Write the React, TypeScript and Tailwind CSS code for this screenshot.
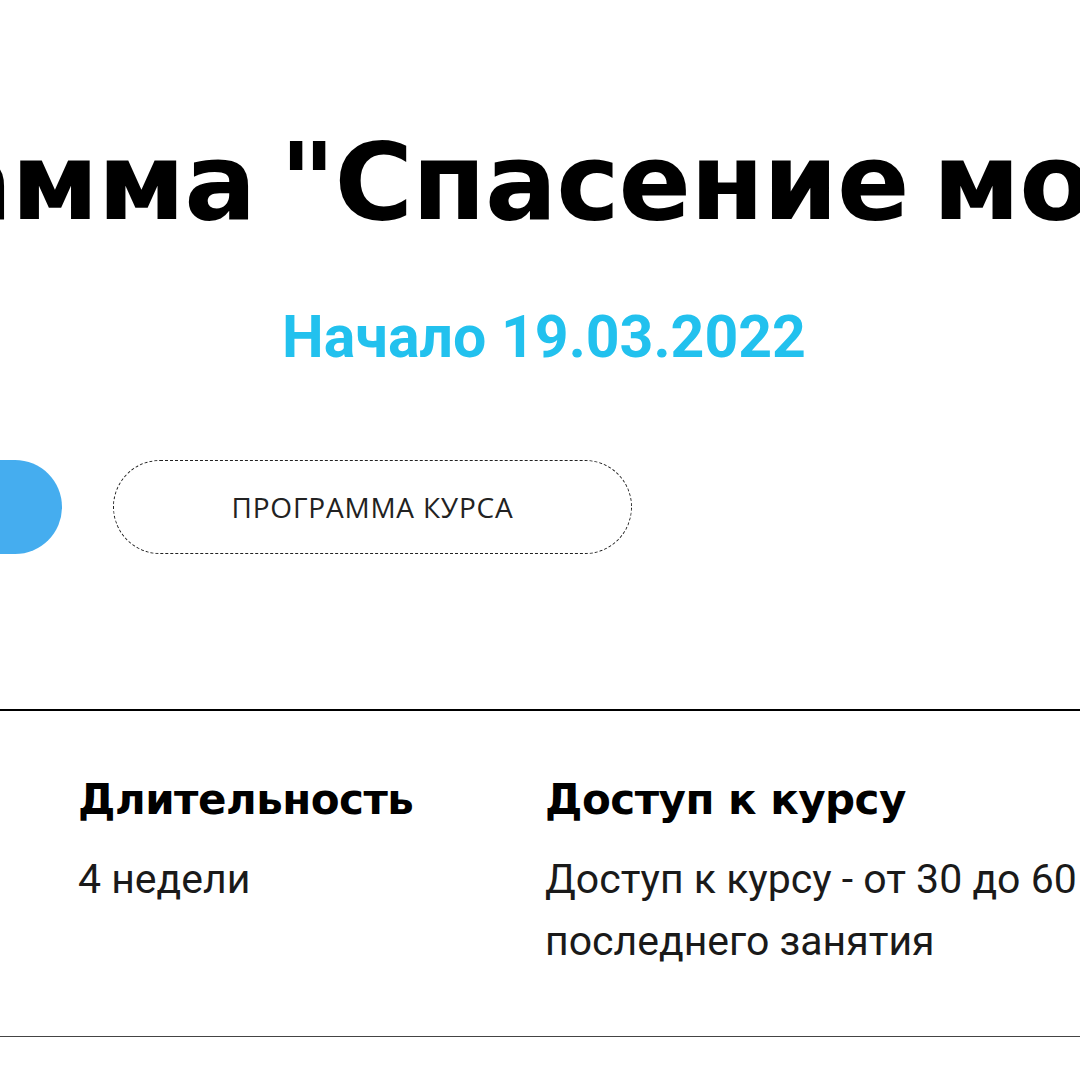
export default function App() {
  return (
    <div className="w-[1080px] h-[1080px] overflow-hidden bg-white">
      {/* заголовок курса, обрезан по краям */}
      <div className="pt-[119px] -ml-[427px] whitespace-nowrap">
        <h1 className="text-[107px] leading-[126px] font-bold text-black font-['DejaVu_Sans',sans-serif] tracking-[-1px] [word-spacing:-12px]">
          Программа "Спасение мозга"
        </h1>
      </div>

      <div className="mt-[57px] flex justify-center pl-[8px]">
        <p className="text-[59px] leading-[70px] font-bold text-[#22c1ee] font-['Roboto',sans-serif]">
          Начало 19.03.2022
        </p>
      </div>

      {/* кнопки */}
      <div className="mt-[88px] -ml-[457px] flex gap-[51px]">
        <button
          type="button"
          className="w-[519px] h-[94px] shrink-0 rounded-full bg-[#45adef]"
        />
        <button
          type="button"
          className="w-[519px] h-[94px] shrink-0 rounded-full border border-dashed border-[#222] text-[28px] text-[#222] tracking-[0.8px] font-['Open_Sans',sans-serif]"
        >
          ПРОГРАММА КУРСА
        </button>
      </div>

      <div className="mt-[155px] h-[2px] bg-black" />

      {/* параметры курса */}
      <div className="pt-[62px] pl-[78px] flex h-[326px] border-b border-[#444]">
        <div className="w-[467px] shrink-0">
          <h3 className="text-[42px] leading-[54px] font-bold text-black font-['DejaVu_Sans',sans-serif] tracking-[-0.5px]">
            Длительность
          </h3>
          <p className="mt-[21px] text-[41px] leading-[62px] text-[#1a1a1a] font-['Roboto',sans-serif] whitespace-nowrap">
            4 недели
          </p>
        </div>
        <div className="w-[560px] shrink-0">
          <h3 className="text-[42px] leading-[54px] font-bold text-black font-['DejaVu_Sans',sans-serif] tracking-[-0.5px]">
            Доступ к курсу
          </h3>
          <p className="mt-[21px] text-[41px] leading-[62px] text-[#1a1a1a] font-['Roboto',sans-serif] w-[790px]">
            Доступ к курсу - от 30 до 60 дней после последнего занятия
          </p>
        </div>
      </div>
    </div>
  );
}
